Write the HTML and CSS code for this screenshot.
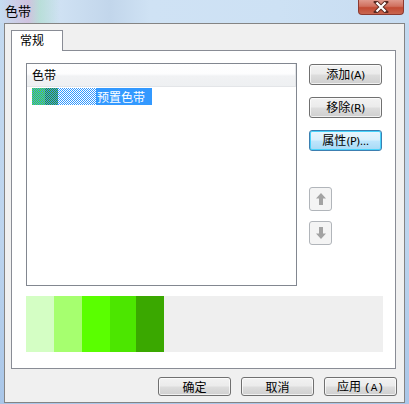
FILE: index.html
```html
<!DOCTYPE html>
<html>
<head>
<meta charset="utf-8">
<link rel="stylesheet" href="styles.css">
</head>
<body>
<div class="window">
  <div class="titlebar">
    <span class="title">色带</span>
    <div class="close">
      <svg width="16" height="12" viewBox="0 0 16 12"><path d="M3 1 L13 11 M13 1 L3 11" stroke="#5a2a22" stroke-width="4" stroke-linecap="square"/><path d="M3.5 1.5 L12.5 10.5 M12.5 1.5 L3.5 10.5" stroke="#fff" stroke-width="2.2"/></svg>
    </div>
  </div>
  <div class="client">
    <div class="tabs"><div class="tab">常规</div></div>
    <div class="panel">
      <div class="main-row">
        <div class="list">
          <div class="list-header">色带</div>
          <div class="list-item">
            <svg class="preview" width="64" height="17" viewBox="0 0 64 17" shape-rendering="crispEdges">
              <defs>
                <pattern id="cb" width="2" height="2" patternUnits="userSpaceOnUse"><rect width="2" height="2" fill="#fff"/><rect width="1" height="1" fill="#3399ff"/><rect x="1" y="1" width="1" height="1" fill="#3399ff"/></pattern>
                <pattern id="cg1" width="2" height="2" patternUnits="userSpaceOnUse"><rect width="2" height="2" fill="#3399ff"/><rect width="1" height="1" fill="#55e020"/><rect x="1" y="1" width="1" height="1" fill="#55e020"/></pattern>
                <pattern id="cg2" width="2" height="2" patternUnits="userSpaceOnUse"><rect width="2" height="2" fill="#3399ff"/><rect width="1" height="1" fill="#3a9a20"/><rect x="1" y="1" width="1" height="1" fill="#3a9a20"/></pattern>
              </defs>
              <rect width="64" height="17" fill="url(#cb)"/>
              <rect width="13" height="17" fill="url(#cg1)"/>
              <rect x="13" width="13" height="17" fill="url(#cg2)"/>
            </svg>
            <span class="item-label">预置色带</span>
          </div>
        </div>
        <div class="side">
          <button class="btn">添加<span class="acc">(A)</span></button>
          <button class="btn">移除<span class="acc">(R)</span></button>
          <button class="btn focus">属性<span class="acc">(P)...</span></button>
          <div class="arrows">
            <div class="arrow-btn"><svg width="12" height="14" viewBox="0 0 12 14"><path d="M6 1 L11 6.5 L8 6.5 L8 13 L4 13 L4 6.5 L1 6.5 Z" fill="#a3a3a3"/></svg></div>
            <div class="arrow-btn"><svg width="12" height="14" viewBox="0 0 12 14"><path d="M6 13 L11 7.5 L8 7.5 L8 1 L4 1 L4 7.5 L1 7.5 Z" fill="#a3a3a3"/></svg></div>
          </div>
        </div>
      </div>
      <div class="swatches">
        <span class="sw" style="background:#d4fec4"></span>
        <span class="sw" style="background:#a6ff6f"></span>
        <span class="sw" style="background:#5aff00"></span>
        <span class="sw w26" style="background:#4ce600"></span>
        <span class="sw" style="background:#3aa800"></span>
      </div>
    </div>
    <div class="footer">
      <button class="btn wide">确定</button>
      <button class="btn wide">取消</button>
      <button class="btn wide">应用<span class="acc2">(A)</span></button>
    </div>
  </div>
</div>
</body>
</html>
```

FILE: styles.css
```css
* { box-sizing: border-box; }
html, body { margin: 0; padding: 0; }
body {
  width: 409px;
  height: 404px;
  overflow: hidden;
  font-family: "Noto Sans CJK SC", "DejaVu Sans", sans-serif;
  font-size: 12px;
  color: #000;
}
.window {
  width: 409px;
  height: 404px;
  display: flex;
  flex-direction: column;
  padding: 0 4px 1px 4px;
  background: linear-gradient(to bottom, #c4daf0 0%, #bcd4ee 60%, #a9c6e8 100%);
}
.titlebar {
  height: 23px;
  margin: 0 -4px;
  padding: 0 5px;
  display: flex;
  justify-content: space-between;
  align-items: flex-start;
  background:
    linear-gradient(to right, rgba(200,220,240,0) 0, rgba(215,160,200,0.45) 28px, rgba(150,220,170,0.35) 40px, rgba(200,220,240,0) 60px),
    linear-gradient(to right, #c6dcf1 0, #cfe1f3 60px, #c2d6eb 110px, #cfe2f4 150px, #cde1f4 280px, #c7dcf1 409px);
}
.title {
  line-height: 13px;
  margin-top: 4px;
  font-size: 13px;
}
.close {
  width: 46px;
  height: 15px;
  border: 1px solid #8c3a30;
  border-top: none;
  border-radius: 0 0 4px 4px;
  background: linear-gradient(to bottom, #e0998c 0%, #d0705e 45%, #c24a33 55%, #c8664f 100%);
  display: flex;
  align-items: center;
  justify-content: center;
}
.close svg { display: block; }
.client {
  flex: 1;
  background: #f0f0f0;
  border: 1px solid #848484;
  padding: 6px 7px 0 6px;
  display: flex;
  flex-direction: column;
}
.tabs {
  display: flex;
  height: 21px;
  margin-bottom: -1px;
  position: relative;
  z-index: 1;
}
.tab {
  width: 52px;
  height: 21px;
  background: #fff;
  border: 1px solid #898c95;
  border-bottom: none;
  padding-left: 8px;
  line-height: 18px;
  font-size: 12px;
}
.panel {
  width: 385px;
  height: 319px;
  background: #fff;
  border: 1px solid #898c95;
  padding: 12px 13px 16px 14px;
  display: flex;
  flex-direction: column;
  gap: 10px;
}
.main-row {
  display: flex;
  gap: 12px;
  height: 223px;
}
.list {
  width: 271px;
  height: 223px;
  border: 1px solid #828790;
  background: #fff;
}
.list-header {
  height: 23px;
  padding-left: 5px;
  line-height: 22px;
  background: linear-gradient(to bottom, #ffffff 0%, #fdfdfe 45%, #f1f2f4 55%, #eef0f2 100%);
  border-bottom: 1px solid #e3e5e8;
  border-right: 1px solid #e3e5e8;
}
.list-item {
  display: flex;
  height: 17px;
  margin: 1px 0 0 5px;
}
.preview { display: block; width: 64px; height: 17px; }
.item-label {
  background: #3399ff;
  color: #fff;
  padding: 0 1px;
  width: 56px;
  line-height: 17px;
}
.side {
  width: 73px;
  display: flex;
  flex-direction: column;
  gap: 12px;
  padding-top: 1px;
}
.btn {
  font-family: "Noto Sans CJK SC", "DejaVu Sans", sans-serif;
  font-size: 12px;
  color: #000;
  height: 21px;
  width: 73px;
  padding: 0;
  border: 1px solid #707070;
  border-radius: 3px;
  background: linear-gradient(to bottom, #f2f2f2 0%, #ebebeb 48%, #dddddd 52%, #cfcfcf 100%);
  box-shadow: inset 0 0 0 1px rgba(255,255,255,0.7);
  line-height: 18px;
  text-align: center;
}
.btn.focus {
  border-color: #3c7fb1;
  box-shadow: inset 0 0 0 1px #48d3fb;
  background: linear-gradient(to bottom, #eaf6fd 0%, #d9f0fc 48%, #bee6fd 52%, #a7d9f5 100%);
}
.acc { font-family: "DejaVu Sans", sans-serif; font-size: 11px; letter-spacing: -0.5px; }
.acc2 { font-family: "Liberation Mono", monospace; font-size: 11px; margin-left: 3px; }
.arrows {
  margin-top: 24px;
  display: flex;
  flex-direction: column;
  gap: 10px;
}
.arrow-btn {
  width: 23px;
  height: 24px;
  border: 1px solid #b1b5ba;
  border-radius: 3px;
  background: #f4f4f4;
  display: flex;
  align-items: center;
  justify-content: center;
}
.arrow-btn svg { display: block; }
.swatches {
  height: 56px;
  width: 357px;
  background: #efefef;
  display: flex;
}
.sw { width: 28px; height: 56px; display: block; }
.sw.w26 { width: 26px; }
.footer {
  display: flex;
  justify-content: flex-end;
  gap: 10px;
  padding-top: 8px;
}
.btn.wide {
  width: 73px;
  height: 19px;
  line-height: 16px;
}
```
